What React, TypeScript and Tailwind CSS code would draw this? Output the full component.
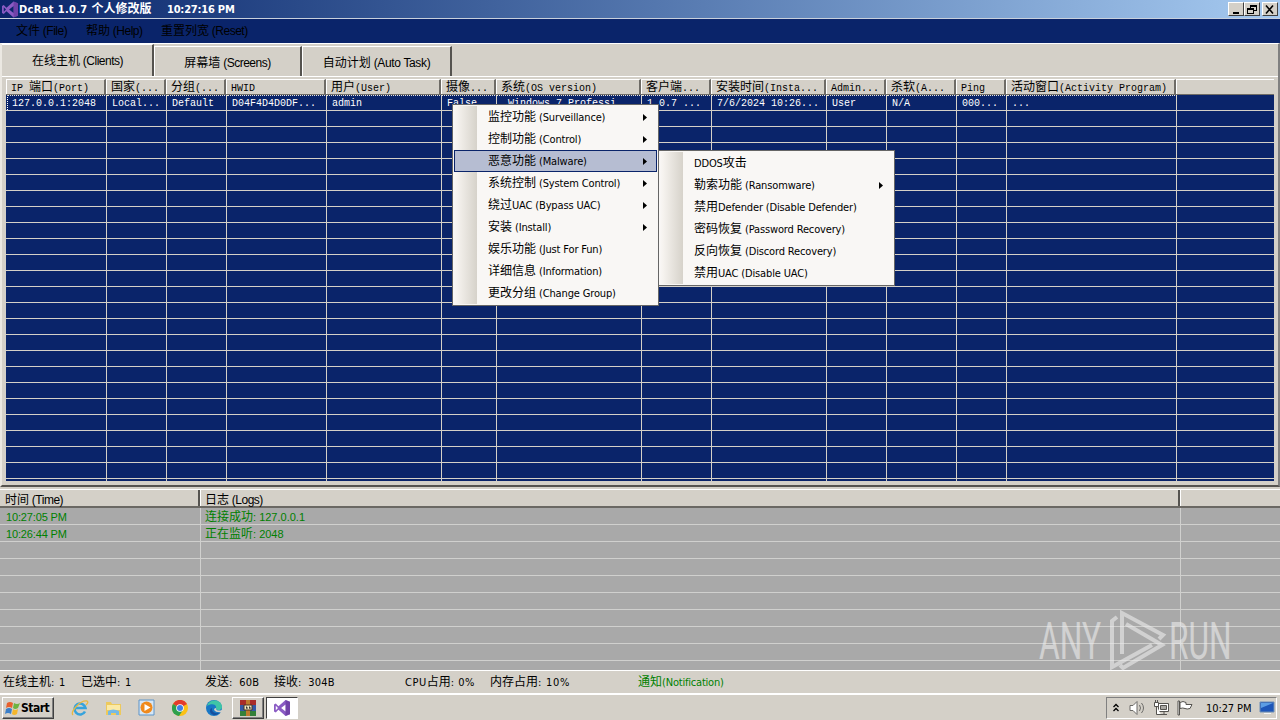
import React from 'react';
import clsx from 'clsx';

interface TextProps {
  children: string;
  className?: string;
  latin?: string;
}

// CJK glyphs are one pixel larger than the latin text around them
const Text: React.FC<TextProps> = ({ children, className, latin = 'text-[11px]' }) => (
  <span className={clsx('whitespace-pre text-[12px] leading-none', className)}>
    {children.split(/([\u4e00-\u9fff]+)/).map((part, i) =>
      /[\u4e00-\u9fff]/.test(part) ? (
        <span key={i} className="text-[12px] tracking-normal">
          {part}
        </span>
      ) : (
        <span key={i} className={latin}>
          {part}
        </span>
      ),
    )}
  </span>
);

const TAHOMA = "font-['DejaVu_Sans_Condensed','DejaVu_Sans','Noto_Sans_CJK_SC',sans-serif]";
const SANS = "font-['Liberation_Sans','Noto_Sans_CJK_SC',sans-serif]";
const MONO = "font-['Liberation_Mono','Noto_Sans_CJK_SC',monospace]";

const columns = [
  { title: 'IP 端口(Port)', value: '127.0.0.1:2048', width: 'w-[100px]' },
  { title: '国家(...', value: 'Local...', width: 'w-[60px]' },
  { title: '分组(...', value: 'Default', width: 'w-[60px]' },
  { title: 'HWID', value: 'D04F4D4D0DF...', width: 'w-[100px]' },
  { title: '用户(User)', value: 'admin', width: 'w-[115px]' },
  { title: '摄像...', value: 'False', width: 'w-[55px]' },
  { title: '系统(OS version)', value: ' Windows 7 Professi...', width: 'w-[145px]' },
  { title: '客户端...', value: '1.0.7 ...', width: 'w-[70px]' },
  { title: '安装时间(Insta...', value: '7/6/2024 10:26...', width: 'w-[115px]' },
  { title: 'Admin...', value: 'User', width: 'w-[60px]' },
  { title: '杀软(A...', value: 'N/A', width: 'w-[70px]' },
  { title: 'Ping', value: '000...', width: 'w-[50px]' },
  { title: '活动窗口(Activity Program)', value: '...', width: 'w-[170px]' },
];

const mainMenu = [
  { label: '监控功能 (Surveillance)', arrow: true },
  { label: '控制功能 (Control)', arrow: true },
  { label: '恶意功能 (Malware)', arrow: true, active: true },
  { label: '系统控制 (System Control)', arrow: true },
  { label: '绕过UAC (Bypass UAC)', arrow: true },
  { label: '安装 (Install)', arrow: true },
  { label: '娱乐功能 (Just For Fun)' },
  { label: '详细信息 (Information)' },
  { label: '更改分组 (Change Group)' },
];

const subMenu = [
  { label: 'DDOS攻击' },
  { label: '勒索功能 (Ransomware)', arrow: true },
  { label: '禁用Defender (Disable Defender)' },
  { label: '密码恢复 (Password Recovery)' },
  { label: '反向恢复 (Discord Recovery)' },
  { label: '禁用UAC (Disable UAC)' },
];

const logs = [
  { time: '10:27:05 PM', text: '连接成功: 127.0.0.1' },
  { time: '10:26:44 PM', text: '正在监听: 2048' },
  ...Array.from({ length: 8 }, () => ({ time: '', text: '' })),
];

const VsIcon = ({ className }: { className?: string }) => (
  <svg className={className} viewBox="0 0 18 18">
    <path fill="#8a5bc4" d="M13 0l5 2v14l-5 2-8-7-3 3-2-1V5l2-1 3 3zM13 5L8 9l5 4zM2 6.500v5L4.500 9z" fillRule="evenodd" />
    <path fill="#5c2d91" d="M13 0l5 2v14l-5 2z" opacity=".55" />
  </svg>
);

const Arrow = () => (
  <svg className="h-[7px] w-[4px]" viewBox="0 0 4 7">
    <path d="M0 0l4 3.500-4 3.500z" fill="#000" />
  </svg>
);

const WinButton = ({ children, className }: { children: React.ReactNode; className?: string }) => (
  <button
    className={clsx(
      'flex h-[14px] w-4 items-center justify-center border border-t-white border-r-[#404040] border-b-[#404040] border-l-white bg-[#d4d0c8]',
      className,
    )}
  >
    <svg className="h-[11px] w-[12px]" viewBox="0 0 12 11" fill="none" stroke="#000" shapeRendering="crispEdges">
      {children}
    </svg>
  </button>
);

const TitleBar = () => (
  <div className={clsx('flex h-[18px] items-center bg-linear-to-r from-[#0a246a] to-[#a6caf0] text-white', TAHOMA)}>
    <VsIcon className="ml-[2px] h-[17px] w-[16px]" />
    <Text className="ml-px w-[148px] font-bold" latin="text-[11px] tracking-[0.35px]">
      DcRat 1.0.7 个人修改版
    </Text>
    <Text className="font-bold" latin="text-[11px] tracking-[-0.2px]">
      10:27:16 PM
    </Text>
    <div className="mr-[2px] ml-auto flex">
      <WinButton>
        <path d="M3 9h6" strokeWidth="2" />
      </WinButton>
      <WinButton>
        <path d="M4.500 4V1.500h6v5H8M4 2h7M1.500 4.500h6v5h-6zM1 5h7" />
      </WinButton>
      <WinButton className="ml-[2px]">
        <path d="M2 1.500l7 8M9 1.500l-7 8" strokeWidth="1.600" shapeRendering="auto" />
      </WinButton>
    </div>
  </div>
);

const Tabs = () => (
  <div className={clsx('flex h-[33px] items-end border-b border-white text-black', SANS)}>
    <div className="flex h-[32px] w-[152px] items-center justify-center border-t border-r-2 border-t-white border-r-[#55534f] pl-px">
      <Text latin="text-[12px] tracking-[-0.5px]">在线主机 (Clients)</Text>
    </div>
    <div className="flex h-[30px] w-[148px] items-center justify-center border-t border-r-2 border-l border-t-white border-r-[#55534f] border-l-white pt-[3px]">
      <Text latin="text-[12px] tracking-[-0.5px]">屏幕墙 (Screens)</Text>
    </div>
    <div className="flex h-[30px] w-[150px] items-center justify-center border-t border-r-2 border-l border-t-white border-r-[#55534f] border-l-white pt-[3px]">
      <Text latin="text-[12px] tracking-[-0.35px]">自动计划 (Auto Task)</Text>
    </div>
  </div>
);

const ClientGrid = () => (
  <div className={clsx('mx-[6px] h-[402px] w-[1268px] overflow-hidden', MONO)}>
    <div className="flex h-[16px] bg-[#d4d0c8] text-black">
      {columns.map((c) => (
        <div
          key={c.title}
          className={clsx(
            'flex shrink-0 items-center overflow-hidden border-t border-r-2 border-b border-t-white border-r-[#6e6b66] border-b-[#6e6b66] pt-px pl-[5px] shadow-[inset_1px_0_#fff]',
            c.width,
          )}
        >
          <Text latin="text-[10px]">{c.title}</Text>
        </div>
      ))}
      <div className="grow border-t border-b border-t-white border-b-[#6e6b66] shadow-[inset_1px_0_#fff]" />
    </div>
    <div className="h-full bg-[#0a246a] text-white">
      {Array.from({ length: 24 }, (_, row) => (
        <div key={row} className="flex h-4 border-b border-[#d4d0c8]">
          {columns.map((c, i) => (
            <div
              key={i}
              className={clsx(
                'flex shrink-0 translate-x-px items-center overflow-hidden shadow-[inset_-1px_0_#d4d0c8]',
                c.width,
                row === 0 && 'border-t border-dotted border-t-[#e8e5dc]',
                row === 0 && i === 0 ? 'border-l pl-[4px]' : 'pl-[5px]',
              )}
            >
              {row === 0 && <Text latin="text-[10px]">{c.value}</Text>}
            </div>
          ))}
        </div>
      ))}
      <div className="flex h-[2px]">
        {columns.map((c, i) => (
          <div key={i} className={clsx('shrink-0 translate-x-px shadow-[inset_-1px_0_#d4d0c8]', c.width)} />
        ))}
      </div>
    </div>
  </div>
);

const LogList = () => (
  <div className={clsx('h-[181px] overflow-hidden bg-[#a9a9a9]', SANS)}>
    <div className="flex h-[19px] border-t border-b-2 border-t-white border-b-[#6a6863] bg-[#d4d0c8] text-black">
      <div className="flex w-[200px] items-center border-r-2 border-[#55534f] pt-[3px] pl-[5px]">
        <Text latin="text-[12px] tracking-[-0.5px]">时间 (Time)</Text>
      </div>
      <div className="flex w-[980px] items-center border-r-2 border-[#55534f] pt-[3px] pl-[5px] shadow-[inset_1px_0_#fff]">
        <Text latin="text-[12px] tracking-[-0.5px]">日志 (Logs)</Text>
      </div>
      <div className="grow shadow-[inset_1px_0_#fff]" />
    </div>
    {logs.map((log, i) => (
      <div key={i} className="flex h-[17px] border-b border-[#d0d0ce] text-[#008000]">
        <div className="flex w-[201px] items-center border-r border-[#d0d0ce] pt-[2px] pl-[6px]">
          <Text latin="text-[11px] tracking-[-0.15px]">{log.time}</Text>
        </div>
        <div className="flex w-[980px] items-center border-r border-[#d0d0ce] pt-[2px] pl-[4px]">
          <Text latin="text-[11px]">{log.text}</Text>
        </div>
      </div>
    ))}
  </div>
);

const Watermark = () => (
  <svg
    className="absolute top-[600px] left-[1030px] h-[80px] w-[210px] opacity-60"
    viewBox="0 0 210 80"
    fill="none"
    stroke="#ececec"
    strokeWidth="4"
  >
    <g fill="#ececec" stroke="none" fontFamily="Roboto, sans-serif" fontWeight="400" fontSize="51">
      <text transform="translate(9 59) scale(.62 1)" textLength="100" lengthAdjust="spacingAndGlyphs">
        ANY
      </text>
      <text transform="translate(139 59) scale(.62 1)" textLength="101" lengthAdjust="spacingAndGlyphs">
        RUN
      </text>
    </g>
    <path d="M87 17l-5 4v46l40-22" />
    <path d="M92 54V13l41 22-4 4M96 24l36 21-39 23-3-3" />
  </svg>
);

interface MenuItem {
  label: string;
  arrow?: boolean;
  active?: boolean;
}

const PopupMenu = ({ items, className }: { items: MenuItem[]; className: string }) => (
  <div className={clsx('absolute border border-[#666] bg-[#f9f7f5] p-px text-black', TAHOMA, className)}>
    <div className="h-full w-full bg-[linear-gradient(90deg,#f9f7f5_0,#f6f3ef_3px,#d6d2ca_23px,#f9f7f5_23px)]">
      {items.map((item) => (
        <div
          key={item.label}
          className={clsx(
            'flex h-[22px] items-center justify-between border',
            item.active ? 'border-[#0a246a] bg-[#b6bdd2]' : 'border-transparent',
            'pr-[9px] pl-[33px]',
          )}
        >
          <Text latin="text-[11px] tracking-[-0.15px]">{item.label}</Text>
          {item.arrow && <Arrow />}
        </div>
      ))}
    </div>
  </div>
);

const StatusBar = () => (
  <div className={clsx('flex h-[23px] items-center border-t border-white pl-[3px] text-black', TAHOMA)}>
    <Text className="w-[78px]" latin="text-[11px] tracking-[0.8px]">在线主机: 1</Text>
    <Text className="w-[124px]" latin="text-[11px] tracking-[0.8px]">已选中: 1</Text>
    <Text className="w-[69px]" latin="text-[11px] tracking-[0.2px]">发送:  60B</Text>
    <Text className="w-[131px]" latin="text-[11px] tracking-[0.2px]">接收:  304B</Text>
    <Text className="w-[85px]" latin="text-[11px] tracking-[0.5px]">CPU占用: 0%</Text>
    <Text className="w-[148px]" latin="text-[11px] tracking-[0.7px]">内存占用: 10%</Text>
    <Text className="text-[#008000]" latin="text-[11px] tracking-[-0.2px]">通知(Notification)</Text>
  </div>
);

const StartButton = () => (
  <button className="flex h-[22px] w-[52px] items-center border border-t-white border-r-[#404040] border-b-[#404040] border-l-white pl-[2px] text-[12px] font-bold shadow-[inset_-1px_-1px_#808080]">
    <svg className="h-[16px] w-[16px]" viewBox="0 0 16 16">
      <path d="M2 3q3-2 6 0L7 8Q4 6 1 8z" fill="#e8602c" />
      <path d="M9 3q3 2 6 0l-2 5q-3 2-5 0z" fill="#6db33f" />
      <path d="M1 9q3-2 6 0l-1 5q-3-2-6 0z" fill="#3a7ec8" />
      <path d="M8 9q2 2 5 0l-1 5q-3 2-5 0z" fill="#f4b62b" />
    </svg>
    <span className="tracking-[-0.5px]">Start</span>
  </button>
);

const Taskbar = () => (
  <div className={clsx('flex h-[27px] items-center border-t-2 border-white pl-[2px] text-black', TAHOMA)}>
    <StartButton />
    <svg className="ml-[17px] h-[18px] w-[18px]" viewBox="0 0 18 18" fill="none">
      <path d="M14 12.500A5.500 5.500 0 1 1 14.500 9H5" stroke="#36a3dc" strokeWidth="2.600" />
      <path d="M2 16C-1 13 9 1 16 2q2 1-1 4" stroke="#e8b840" strokeWidth="1.300" />
    </svg>
    <svg className="ml-[16px] h-[18px] w-[17px]" viewBox="0 0 17 18">
      <path d="M1 3h5l1 2h9v11H1z" fill="#edc95c" />
      <path d="M2 6h13v5H2z" fill="#fbe9a5" />
      <path d="M3 16v-4q5-3 11 0v4h-3v-2H6v2z" fill="#74b9e5" />
    </svg>
    <svg className="ml-[16px] h-[17px] w-[17px]" viewBox="0 0 17 17">
      <path d="M1 1h15v15H1z" fill="#d7e7f6" stroke="#5c94c8" />
      <circle cx="8.500" cy="8.500" r="6" fill="#f08a1d" />
      <path d="M6.500 5l6 3.500-6 3.500z" fill="#fff" />
    </svg>
    <svg className="ml-[17px] h-[16px] w-[16px]" viewBox="0 0 16 16">
      <circle cx="8" cy="8" r="8" fill="#fbc116" />
      <path d="M8 8L1 4a8 8 0 0 1 14 0z" fill="#e33b2e" />
      <path d="M8 8L1 4a8 8 0 0 0 6 12l4-6z" fill="#2da04e" />
      <circle cx="8" cy="8" r="3.800" fill="#fff" />
      <circle cx="8" cy="8" r="3" fill="#3f7fe8" />
    </svg>
    <svg className="ml-[18px] h-[16px] w-[16px]" viewBox="0 0 16 16">
      <circle cx="8" cy="8" r="8" fill="#1877c5" />
      <path d="M1 6C3-2 16-1 16 7c0 4-6 4-6 1 1-4-5-5-9-2z" fill="#3fc5a6" />
      <path d="M6 8c-1 4 4 7 8 4-3 5-10 3-10-1 0-2 1-3 2-3z" fill="#164f9e" />
      <path d="M10 8c0 3 3 3 6 2v2q-6 1-8-2 0-2 2-2z" fill="#d4d0c8" />
    </svg>
    <div className="ml-[10px] flex h-[22px] w-[32px] items-center justify-center border border-t-white border-r-[#404040] border-b-[#404040] border-l-white shadow-[inset_-1px_-1px_#808080]">
      <svg className="h-[16px] w-[16px]" viewBox="0 0 16 16">
        <path d="M0 0h16v5H0z" fill="#a92c2a" />
        <path d="M0 5h16v6H0z" fill="#3458a6" />
        <path d="M0 11h16v5H0z" fill="#34803b" />
        <path d="M6 0h4v16H6z" fill="#bf7b2e" />
        <path d="M4 5h8v5H4z" fill="#eee4c0" stroke="#4b3520" />
        <path d="M6 7h1v2M9 7h1v2" stroke="#333" />
      </svg>
    </div>
    <div className="ml-[2px] flex h-[22px] w-[32px] items-center justify-center border border-t-[#404040] border-r-white border-b-white border-l-[#404040] bg-white">
      <VsIcon className="h-[16px] w-[16px]" />
    </div>
    <div className="mr-[3px] ml-auto flex h-[22px] w-[171px] items-center border border-t-[#808080] border-r-white border-b-white border-l-[#808080] pl-[6px]">
      <svg className="h-[9px] w-[6px]" viewBox="0 0 6 9" fill="none" stroke="#000" strokeWidth="1.300">
        <path d="M.5 4L3 1.500 5.500 4M.5 8L3 5.500 5.500 8" />
      </svg>
      <svg className="ml-[10px] h-[16px] w-[17px]" viewBox="0 0 17 16" fill="#fff" stroke="#6c6b68">
        <path d="M1 5.500h3L8 1.500v13l-4-4H1z" />
        <path d="M10.500 5q2 3 0 6M12.500 3q4 5 0 10" fill="none" />
      </svg>
      <svg className="ml-[7px] h-[16px] w-[17px]" viewBox="0 0 17 16" fill="#fff" stroke="#55534f">
        <path d="M5.500 3.500h10v8h-10z" />
        <path d="M7.500 5.500h6v4h-6z" fill="#a9a7a2" />
        <path d="M8 14.500h6M11 11.500v3M3.500 6v8.500H8" />
        <path d="M1.500 2.500h4v4h-4zM2.500 0v2M4.500 0v2" />
      </svg>
      <svg className="ml-[7px] h-[16px] w-[16px]" viewBox="0 0 16 16" fill="#fff" stroke="#55534f">
        <path d="M1 1h1.500v14H1z" />
        <path d="M3 2.500q3-2 6 0v2h6l-2 4q-3 1-5 0-2-1-5 0z" />
      </svg>
      <Text className="ml-[13px]" latin="text-[11px] tracking-[-0.1px]">10:27 PM</Text>
      <svg className="ml-auto mr-px h-[15px] w-[16px]" viewBox="0 0 16 15">
        <path d="M1 2h14v10H1z" fill="#1e56b8" stroke="#6d8fb7" />
        <path d="M2 3h12L2 8z" fill="#5c9de4" />
        <path d="M5 13.500h7" stroke="#f4f4f4" strokeWidth="1" />
      </svg>
    </div>
  </div>
);

const App: React.FC = () => {
  return (
    <div className="relative flex h-[720px] w-[1280px] flex-col overflow-hidden bg-[#d4d0c8]">
      <TitleBar />
      <div className={clsx('flex h-[25px] items-center border-t border-[#c8d0dc] bg-[#0a246a] pl-[16px] text-black', SANS)}>
        <Text className="w-[70px]" latin="text-[12px] tracking-[-0.5px]">文件 (File)</Text>
        <Text className="w-[75px]" latin="text-[12px] tracking-[-0.5px]">帮助 (Help)</Text>
        <Text latin="text-[12px] tracking-[-0.5px]">重置列宽 (Reset)</Text>
      </div>
      <div className="h-[444px] border-t border-r-2 border-b-2 border-l-2 border-t-white border-r-[#808080] border-b-[#55534f] border-l-[#ebe8e2]">
        <Tabs />
        <div className="-mx-[2px] pt-[2px]">
          <ClientGrid />
        </div>
      </div>
      <div className="mt-[2px]">
        <LogList />
      </div>
      <StatusBar />
      <Taskbar />
      <Watermark />
      <PopupMenu items={mainMenu} className="top-[104px] left-[452px] h-[202px] w-[207px]" />
      <PopupMenu items={subMenu} className="top-[150px] left-[658px] h-[136px] w-[237px]" />
    </div>
  );
};

export default App;
